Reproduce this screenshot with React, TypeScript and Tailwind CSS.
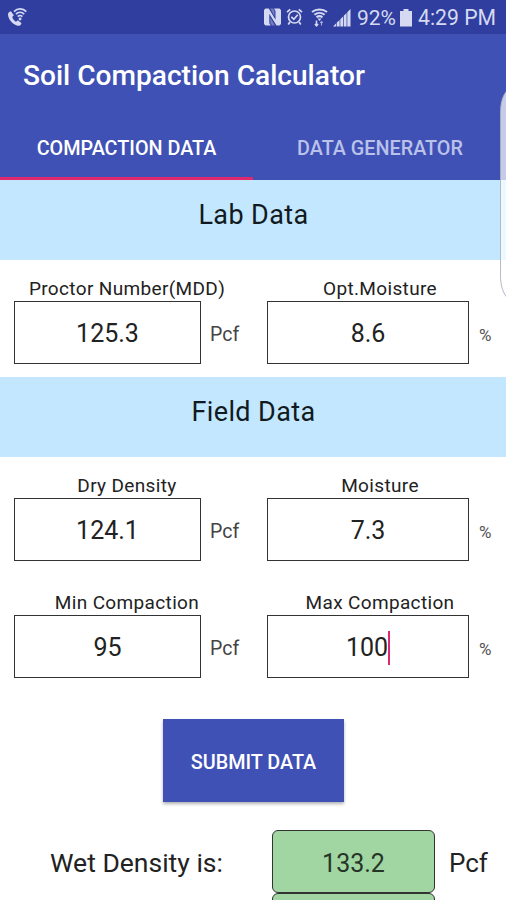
interface FieldProps {
  label: string;
  value: string;
  unit: string;
  focused?: boolean;
}

function PhoneWifiIcon() {
  return (
    <svg width="22" height="20" viewBox="0 0 22 20" fill="none">
      <path
        d="M3.800 4.200C2.200 4.600.9 6 1 7.700c.5 5.400 5 9.900 9.900 11.100 1.700.2 3.200-.9 3.600-2.600l-3.500-2.900-2.100 1.500c-1.700-1.100-3-2.700-3.700-4.700l1.700-1.900z"
        fill="currentColor"
      />
      <path d="M7 4.600C10.500.9 16 1 19.300 4.600M9 7.100c2.300-2.500 6-2.400 8.200.1M10.800 9.600c1.300-1.500 3.200-1.500 4.600 0" stroke="currentColor" strokeWidth="1.700" />
      <circle cx="13.100" cy="12" r="1.400" fill="currentColor" />
    </svg>
  );
}

function NfcIcon() {
  return (
    <svg width="17" height="18" viewBox="0 0 17 18" fill="currentColor">
      <path d="M1.500.6H4.800l6.700 11.200V3L10 .6h5.500L17 2v14l-1.500 1.400h-3L5.300 5.800v9.400l1.500 2.200H1.500L0 16V2z" />
      <path d="M6.200.6H9l1.500 2.200v5.800zM6.300 9.500l4.700 7.900H8l-1.700-2.300z" opacity="0.4" />
    </svg>
  );
}

function AlarmIcon() {
  return (
    <svg width="17" height="18" viewBox="0 0 17 18" fill="none" stroke="currentColor" strokeWidth="1.700">
      <circle cx="8.500" cy="9" r="6" />
      <path d="M5.300 8.800l2.500 2.400 4-4.400M1 4.200l3.200-2.900M16 4.200l-3.200-2.900M4 14l-1.800 2.500M13 14l1.800 2.500" />
    </svg>
  );
}

function WifiIcon() {
  return (
    <svg width="17" height="19" viewBox="0 0 17 19" fill="none" stroke="currentColor">
      <path d="M1 4C5.200.6 11.800.6 16 4M3.400 6.800c3-2.400 7.200-2.400 10.200 0M5.500 9.300c1.900-1.500 4.100-1.500 6 0" strokeWidth="2" />
      <path d="M6.500 10.500h4l-2 2.500z" fill="currentColor" stroke="none" />
      <path d="M5.500 12.500v5.300M3.900 16l1.600 1.800L7.100 16" strokeWidth="1.500" />
      <path d="M10.500 17.500v-4M9.200 14.900l1.300-1.400 1.300 1.400" strokeWidth="1.100" opacity="0.7" />
    </svg>
  );
}

function SignalIcon() {
  return (
    <svg width="18" height="18" viewBox="0 0 18 18" fill="currentColor">
      <path d="M0 17.500L3 14.500v3zM3.700 13.800l2.900-2.900v6.600H3.700zM7.300 10.200l2.800-2.800v10.100H7.300zM10.800 6.700l2.800-2.800v13.600h-2.800zM14.300 3.200L17.500 0v17.500h-3.200z" />
    </svg>
  );
}

function BatteryIcon() {
  return (
    <svg width="12" height="18" viewBox="0 0 12 18" fill="currentColor">
      <path d="M3.500 0h5v2H12v15.500H0V2h3.500z" />
    </svg>
  );
}

function StatusBar() {
  return (
    <div className="flex h-[34px] items-center bg-[#303f9f] pl-[7px] pr-[10px] text-[#d5d9f2]">
      <PhoneWifiIcon />
      <div className="ml-auto flex items-center">
        <NfcIcon />
        <div className="ml-[5px]">
          <AlarmIcon />
        </div>
        <div className="ml-[8px]">
          <WifiIcon />
        </div>
        <div className="ml-[5px] mt-px">
          <SignalIcon />
        </div>
        <span className="ml-[6px] mt-px text-[21px] leading-6">92%</span>
        <div className="ml-[4px] mt-px">
          <BatteryIcon />
        </div>
        <span className="ml-[6px] mt-px text-[21.2px] leading-6">4:29 PM</span>
      </div>
    </div>
  );
}

function SectionTitle({ children }: { children: string }) {
  return (
    <h2 className="h-20 bg-[#c3e7ff] pl-px pt-[19px] text-center text-[27px] leading-8 tracking-[0.4px] text-[#111a20]">
      {children}
    </h2>
  );
}

function Field({ label, value, unit, focused }: FieldProps) {
  return (
    <div className="h-[117px] w-[253px] pt-4">
      <div className="h-[25px] pl-px text-center text-[19px] leading-[26px] tracking-[0.35px] text-[#222]">{label}</div>
      <div className="flex items-center pl-[14px]">
        <div
          className={
            unit === '%'
              ? 'flex h-[63px] w-[202px] items-center justify-center border-[1.5px] border-[#333] pt-[2px]'
              : 'flex h-[63px] w-[187px] items-center justify-center border-[1.5px] border-[#333] pt-[2px]'
          }
        >
          <span className="text-[25px] text-[#222]">{value}</span>
          {focused && <span className="h-[34px] w-[2px] bg-[#e0286f]" />}
        </div>
        <span
          className={
            unit === '%' ? 'ml-[10px] mt-[7px] text-[17px] text-[#555]' : 'ml-[9px] mt-[5px] text-[19.5px] text-[#444]'
          }
        >
          {unit}
        </span>
      </div>
    </div>
  );
}

export default function App() {
  return (
    <div className="relative h-[900px] w-[506px] overflow-hidden bg-white font-['Roboto',sans-serif]">
      <StatusBar />

      <header className="h-[146px] bg-[#3f51b5]">
        <h1 className="h-[80px] pl-[23px] pt-[26px] text-[28.1px] font-medium leading-8 text-white">
          Soil Compaction Calculator
        </h1>
        <nav className="flex h-[66px] text-[19.8px] font-medium">
          <div className="w-[253px] border-b-[3px] border-[#e0286f] pt-[20px] text-center leading-[30px] text-white">
            COMPACTION DATA
          </div>
          <div className="w-[253px] pl-px pt-[20px] text-center leading-[30px] text-[#bbc2ea]">DATA GENERATOR</div>
        </nav>
      </header>

      <SectionTitle>Lab Data</SectionTitle>
      <div className="flex">
        <Field label="Proctor Number(MDD)" value="125.3" unit="Pcf" />
        <Field label="Opt.Moisture" value="8.6" unit="%" />
      </div>

      <SectionTitle>Field Data</SectionTitle>
      <div className="flex">
        <Field label="Dry Density" value="124.1" unit="Pcf" />
        <Field label="Moisture" value="7.3" unit="%" />
      </div>
      <div className="flex">
        <Field label="Min Compaction" value="95" unit="Pcf" />
        <Field label="Max Compaction" value="100" unit="%" focused />
      </div>

      <div className="flex justify-center pt-7">
        <button className="h-[83px] w-[181px] bg-[#3f51b5] pl-px pt-[4px] text-[19.8px] font-medium text-white shadow-[0_2px_3px_rgba(0,0,0,0.3)]">
          SUBMIT DATA
        </button>
      </div>

      <div className="flex items-start pt-7">
        <div className="w-[272px] pl-[50px] pt-[17px] text-[26.5px] leading-8 text-[#222]">Wet Density is:</div>
        <div>
          <div className="flex h-[63px] w-[163px] items-center justify-center rounded-md border-[1.5px] border-[#333] bg-[#a1d6a3] pt-1 text-[25px] text-[#263526]">
            133.2
          </div>
          <div className="h-[63px] w-[163px] rounded-md border-[1.5px] border-[#333] bg-[#a1d6a3]" />
        </div>
        <div className="pl-[14px] pt-[17px] text-[26px] leading-8 text-[#222]">Pcf</div>
      </div>

      {/* Edge panel handle */}
      <div className="absolute left-[500px] top-[88px] h-[212px] w-6 rounded-[16px/32px] border border-gray-400/70 bg-white/70" />
    </div>
  );
}
